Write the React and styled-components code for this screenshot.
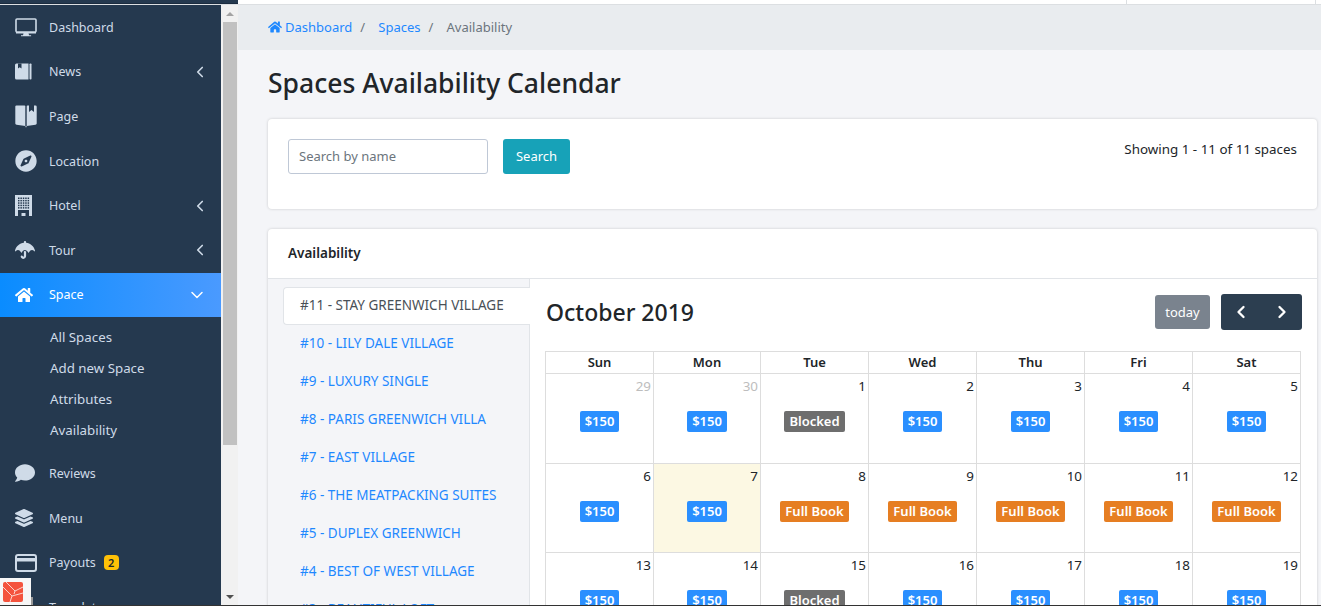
import React from "react";
import styled, { createGlobalStyle } from "styled-components";
import { ChevronLeft, ChevronRight, ChevronDown } from "lucide-react";
import { FaHome, FaCompass, FaUmbrella, FaComment, FaLayerGroup, FaFileAlt } from "react-icons/fa";

const GlobalStyle = createGlobalStyle`
	html, body {
		margin: 0;
		height: 100%;
		overflow: hidden;
		font-family: "Noto Sans", "Open Sans", sans-serif;
		font-size: 13px;
		color: #212529;
	}
	* {
		box-sizing: border-box;
	}
`;

function DesktopIcon() {
	return (
		<svg width="22" height="19" viewBox="0 0 22 19">
			<rect x="1" y="1" width="20" height="13" rx="1" fill="none" stroke="currentColor" strokeWidth="1.6" />
			<path d="M1 14h20v1.4H1zM8.500 15.400h5l.6 1.800h2v1H6v-1h2z" fill="currentColor" />
		</svg>
	);
}

function NewsIcon() {
	return (
		<svg width="17" height="17" viewBox="0 0 17 17">
			<path d="M1.500 0.500H13.500V16.500H1.500Q0 16.500 0 15V2Q0 0.500 1.500 0.500z" fill="currentColor" />
			<path d="M3 0.500h3.500v5L4.700 4.200 3 5.500z" fill="#25394f" />
			<rect x="14.500" y="0.500" width="2" height="16" rx="0.800" fill="currentColor" />
		</svg>
	);
}

function PageIcon() {
	return (
		<svg width="22" height="23" viewBox="0 0 22 23">
			<path d="M1.500 0.500H9.500Q10.300 0.500 10.300 1.500V21L1.500 19.800Q0.300 19.600 0.300 18.500V1.700Q0.300 0.500 1.500 0.500z" fill="currentColor" />
			<path d="M11.700 21V1.500Q11.700 0.500 12.500 0.500H14V7L16.500 5 19 7V0.500H20.500Q21.700 0.500 21.700 1.700V18.500Q21.700 19.600 20.500 19.800z" fill="currentColor" />
			<path d="M10.300 21h1.400l-.7 1.800z" fill="currentColor" />
		</svg>
	);
}

function BuildingIcon() {
	const windows = [];
	for (let row = 0; row < 5; row++) {
		for (let col = 0; col < 5; col++) {
			windows.push(<rect key={row + "-" + col} x={3 + col * 2.4} y={2.500 + row * 2.400} width="1.500" height="1.500" />);
		}
	}
	return (
		<svg width="17" height="21" viewBox="0 0 17 21">
			<rect width="17" height="21" fill="currentColor" />
			<g fill="#25394f">
				{windows}
				<path d="M3 15h11v6h-3.500v-3h-4v3H3z" />
			</g>
		</svg>
	);
}

function CardIcon() {
	return (
		<svg width="22" height="18" viewBox="0 0 22 18">
			<rect x="1" y="1" width="20" height="16" rx="2" fill="none" stroke="currentColor" strokeWidth="2" />
			<rect x="1" y="4" width="20" height="3.500" fill="currentColor" />
		</svg>
	);
}

const navItems = [
	{ label: "Dashboard", icon: <DesktopIcon /> },
	{ label: "News", icon: <NewsIcon />, more: true },
	{ label: "Page", icon: <PageIcon /> },
	{ label: "Location", icon: <FaCompass size={22} /> },
	{ label: "Hotel", icon: <BuildingIcon />, more: true },
	{ label: "Tour", icon: <FaUmbrella size={20} />, more: true },
	{
		label: "Space",
		icon: <FaHome size={18} />,
		active: true,
		children: ["All Spaces", "Add new Space", "Attributes", "Availability"],
	},
	{ label: "Reviews", icon: <FaComment size={20} /> },
	{ label: "Menu", icon: <FaLayerGroup size={18} /> },
	{ label: "Payouts", icon: <CardIcon />, badge: 2 },
	{ label: "Template", icon: <FaFileAlt size={20} /> },
];

const spaces = [
	"#11 - STAY GREENWICH VILLAGE",
	"#10 - LILY DALE VILLAGE",
	"#9 - LUXURY SINGLE",
	"#8 - PARIS GREENWICH VILLA",
	"#7 - EAST VILLAGE",
	"#6 - THE MEATPACKING SUITES",
	"#5 - DUPLEX GREENWICH",
	"#4 - BEST OF WEST VILLAGE",
	"#3 - BEAUTIFUL LOFT",
];

const weekDays = ["Sun", "Mon", "Tue", "Wed", "Thu", "Fri", "Sat"];

const P = { title: "$150", kind: "price" };
const B = { title: "Blocked", kind: "blocked" };
const F = { title: "Full Book", kind: "full" };

const weeks = [
	[
		{ day: 29, muted: true, event: P },
		{ day: 30, muted: true, event: P },
		{ day: 1, event: B },
		{ day: 2, event: P },
		{ day: 3, event: P },
		{ day: 4, event: P },
		{ day: 5, event: P },
	],
	[
		{ day: 6, event: P },
		{ day: 7, today: true, event: P },
		{ day: 8, event: F },
		{ day: 9, event: F },
		{ day: 10, event: F },
		{ day: 11, event: F },
		{ day: 12, event: F },
	],
	[
		{ day: 13, event: P },
		{ day: 14, event: P },
		{ day: 15, event: B },
		{ day: 16, event: P },
		{ day: 17, event: P },
		{ day: 18, event: P },
		{ day: 19, event: P },
	],
];

export default function App() {
	return (
		<Page>
			<GlobalStyle />
			<TopStrip>
				<TopDark />
				<TopCell $width="889px" />
				<TopCell $width="189px" />
			</TopStrip>
			<Body>
				<Sidebar>
					{navItems.map((item) => (
						<React.Fragment key={item.label}>
							<NavItem $active={item.active}>
								<NavIcon>{item.icon}</NavIcon>
								<span>{item.label}</span>
								{item.badge && <NavBadge>{item.badge}</NavBadge>}
								{item.more && (
									<NavArrow>
										<ChevronLeft size={18} strokeWidth={2.2} />
									</NavArrow>
								)}
								{item.active && (
									<DownArrow>
										<ChevronDown size={20} strokeWidth={1.8} />
									</DownArrow>
								)}
							</NavItem>
							{item.children && (
								<SubNav>
									{item.children.map((child) => (
										<SubItem key={child}>{child}</SubItem>
									))}
								</SubNav>
							)}
						</React.Fragment>
					))}
				</Sidebar>
				<ScrollBar>
					<ArrowUp />
					<ScrollThumb />
					<ArrowDown />
				</ScrollBar>
				<Main>
					<Breadcrumb>
						<Crumb href="#">
							<FaHome size={14} /> Dashboard
						</Crumb>
						<Slash>/</Slash>
						<Crumb href="#">Spaces</Crumb>
						<Slash>/</Slash>
						<CurrentCrumb>Availability</CurrentCrumb>
					</Breadcrumb>
					<Content>
						<Title>Spaces Availability Calendar</Title>
						<SearchCard>
							<SearchInput placeholder="Search by name" />
							<SearchButton>Search</SearchButton>
							<ResultCount>Showing 1 - 11 of 11 spaces</ResultCount>
						</SearchCard>
						<PanelCard>
							<PanelHeader>Availability</PanelHeader>
							<PanelBody>
								<SpaceList>
									{spaces.map((name, i) => (
										<SpaceTab key={name} $active={i === 0}>
											{name}
										</SpaceTab>
									))}
								</SpaceList>
								<CalendarPanel>
									<Toolbar>
										<MonthTitle>October 2019</MonthTitle>
										<TodayButton>today</TodayButton>
										<NavButtons>
											<ChevronLeft size={20} strokeWidth={2.8} />
											<ChevronRight size={20} strokeWidth={2.8} />
										</NavButtons>
									</Toolbar>
									<CalendarGrid>
										{weekDays.map((d) => (
											<DayHead key={d}>{d}</DayHead>
										))}
										{weeks.flat().map((cell) => (
											<DayCell key={cell.day + (cell.muted ? "m" : "")} $today={cell.today}>
												<DayNumber $muted={cell.muted}>{cell.day}</DayNumber>
												<EventBadge $kind={cell.event.kind}>{cell.event.title}</EventBadge>
											</DayCell>
										))}
									</CalendarGrid>
								</CalendarPanel>
							</PanelBody>
						</PanelCard>
					</Content>
				</Main>
			</Body>
			<BottomRule />
			<LogoBox>
				<svg width="20" height="20" viewBox="0 0 20 20">
					<rect width="20" height="20" rx="2" fill="#f4533d" />
					<path d="M0 5l9 9 11-3M9 14l-2 6M3 0l9 9 8-4M12 9l-1 3" fill="none" stroke="#fbe3de" strokeWidth="0.9" />
				</svg>
			</LogoBox>
		</Page>
	);
}

const Page = styled.div`
	position: relative;
	display: flex;
	flex-direction: column;
	height: 100vh;
	overflow: hidden;
	background-color: #f4f5f8;
`;

const TopStrip = styled.div`
	display: flex;
	flex: 0 0 4px;
	background-color: #fff;
	border-bottom: 1px solid #dcdfe2;
`;

const TopDark = styled.div`
	width: 238px;
	height: 4px;
	background-color: #25394f;
	border-bottom: 1px solid #1c2c3f;
`;

const TopCell = styled.div`
	width: ${(props) => props.$width};
	border-right: 1px solid #dcdfe2;
`;

const Body = styled.div`
	display: flex;
	flex: 1;
	min-height: 0;
`;

const Sidebar = styled.nav`
	flex: 0 0 221px;
	background-color: #25394f;
	color: #cfdbe8;
	overflow: hidden;
`;

const NavItem = styled.div`
	display: flex;
	align-items: center;
	height: 44.6px;
	padding: 0 12px 0 15px;
	font-size: 12.5px;
	color: ${(props) => (props.$active ? "#fff" : "#cfdbe8")};
	background: ${(props) => (props.$active ? "linear-gradient(90deg, #0a8cff, #4a9aff)" : "none")};
`;

const NavIcon = styled.span`
	display: flex;
	align-items: center;
	flex: 0 0 34px;
`;

const NavArrow = styled.span`
	display: flex;
	margin-left: auto;
`;

const DownArrow = styled(NavArrow)`
	margin-right: 2px;
`;

const NavBadge = styled.span`
	width: 15px;
	height: 15px;
	margin-left: 8px;
	line-height: 15px;
	text-align: center;
	font-size: 11px;
	font-weight: 600;
	color: #212529;
	background-color: #ffc107;
	border-radius: 4px;
`;

const SubNav = styled.div`
	padding: 5px 0 5px 50px;
`;

const SubItem = styled.div`
	height: 31px;
	line-height: 31px;
	font-size: 13.3px;
	color: #cfdbe8;
`;

const ScrollBar = styled.div`
	display: flex;
	flex-direction: column;
	align-items: center;
	flex: 0 0 17px;
	background-color: #f1f1f1;
`;

const ArrowUp = styled.div`
	margin: 7px 0 6px;
	border: 4px solid transparent;
	border-top: 0;
	border-bottom: 4px solid #a3a3a3;
`;

const ScrollThumb = styled.div`
	width: 14px;
	height: 423px;
	background-color: #c1c1c1;
`;

const ArrowDown = styled.div`
	margin: auto 0 6px;
	border: 4px solid transparent;
	border-bottom: 0;
	border-top: 4px solid #505050;
`;

const Main = styled.main`
	flex: 1;
	min-width: 0;
	overflow: hidden;
`;

const Breadcrumb = styled.div`
	display: flex;
	align-items: center;
	height: 45px;
	padding: 0 0 2px 30px;
	background-color: #e9ecef;
	font-size: 13px;
`;

const Crumb = styled.a`
	display: inline-flex;
	align-items: center;
	gap: 3px;
	color: #1e88ff;
	text-decoration: none;
`;

const Slash = styled.span`
	width: 26px;
	padding-left: 8px;
	color: #6c757d;
`;

const CurrentCrumb = styled.span`
	color: #6c757d;
`;

const Content = styled.div`
	padding: 0 4px 0 30px;
`;

const Title = styled.h1`
	margin: 0;
	height: 69px;
	line-height: 66px;
	font-size: 26.5px;
	font-weight: 500;
	color: #212529;
`;

const SearchCard = styled.div`
	display: flex;
	align-items: flex-start;
	height: 90px;
	padding: 20px;
	background-color: #fff;
	border-radius: 4px;
	box-shadow: 0 0 3px rgba(0, 0, 0, 0.18);
`;

const SearchInput = styled.input`
	width: 200px;
	height: 35px;
	padding: 0 10px 2px;
	font: inherit;
	font-size: 13px;
	border: 1px solid #bfc8d6;
	border-radius: 3px;
	outline: none;
	&::placeholder {
		color: #6c757d;
		opacity: 1;
	}
`;

const SearchButton = styled.button`
	width: 67px;
	height: 35px;
	margin-left: 15px;
	padding: 0 0 2px;
	font: inherit;
	font-size: 13px;
	color: #fff;
	background-color: #17a2b8;
	border: 0;
	border-radius: 3px;
`;

const ResultCount = styled.div`
	margin-left: auto;
	font-size: 13.4px;
	line-height: 20px;
`;

const PanelCard = styled.div`
	margin-top: 20px;
	background-color: #fff;
	border-radius: 4px 4px 0 0;
	box-shadow: 0 0 3px rgba(0, 0, 0, 0.18);
`;

const PanelHeader = styled.div`
	height: 50px;
	line-height: 48px;
	padding-left: 20px;
	font-size: 13.5px;
	font-weight: 600;
	border-bottom: 1px solid #e1e4e8;
`;

const PanelBody = styled.div`
	display: flex;
`;

const SpaceList = styled.div`
	flex: 0 0 262px;
	padding: 8px 0 0 15px;
	background-color: #f4f5f8;
	border-right: 1px solid #e1e4e8;
`;

const SpaceTab = styled.div`
	position: relative;
	height: 38px;
	margin-right: ${(props) => (props.$active ? "-1px" : "0")};
	padding-left: 16px;
	line-height: 34px;
	font-size: 13.5px;
	color: ${(props) => (props.$active ? "#495057" : "#1e88ff")};
	background-color: ${(props) => (props.$active ? "#fff" : "transparent")};
	border: 1px solid ${(props) => (props.$active ? "#e1e4e8" : "transparent")};
	border-right: 0;
	border-radius: 4px 0 0 4px;
`;

const CalendarPanel = styled.div`
	flex: 1;
	min-width: 0;
	padding: 15px 15px 0;
`;

const Toolbar = styled.div`
	display: flex;
	align-items: flex-start;
	height: 57px;
`;

const MonthTitle = styled.h2`
	margin: 0 auto 0 1px;
	line-height: 36px;
	font-size: 23px;
	font-weight: 500;
`;

const TodayButton = styled.button`
	width: 55px;
	height: 34px;
	margin-top: 1px;
	padding: 0 0 1px;
	font: inherit;
	font-size: 13px;
	color: #fff;
	background-color: #7a838e;
	border: 0;
	border-radius: 3px;
`;

const NavButtons = styled.div`
	display: flex;
	align-items: center;
	justify-content: space-between;
	width: 81px;
	height: 36px;
	margin-left: 11px;
	padding: 0 10px;
	color: #fff;
	background-color: #2c3e50;
	border-radius: 3px;
`;

const CalendarGrid = styled.div`
	display: grid;
	grid-template-columns: 108px 107px repeat(5, 108px);
	grid-template-rows: 22px 90px 89px 90px;
	width: 756px;
	border-top: 1px solid #ddd;
	border-left: 1px solid #ddd;
`;

const DayHead = styled.div`
	line-height: 21px;
	text-align: center;
	font-size: 13px;
	font-weight: 600;
	border-right: 1px solid #ddd;
	border-bottom: 1px solid #ddd;
`;

const DayCell = styled.div`
	display: flex;
	flex-direction: column;
	align-items: center;
	padding-top: 2px;
	background-color: ${(props) => (props.$today ? "#fcf8e3" : "#fff")};
	border-right: 1px solid #ddd;
	border-bottom: 1px solid #ddd;
`;

const DayNumber = styled.div`
	align-self: flex-end;
	padding-right: 2px;
	line-height: 20px;
	font-size: 13.4px;
	color: ${(props) => (props.$muted ? "#bdbdbd" : "#212529")};
`;

const eventColors = {
	price: "#2a8fff",
	blocked: "#6e6e6e",
	full: "#e67e22",
};

const EventBadge = styled.div`
	margin-top: 15px;
	padding: 0 5px;
	height: 21px;
	line-height: 20px;
	font-size: 13px;
	font-weight: 600;
	color: #fff;
	background-color: ${(props) => eventColors[props.$kind]};
	border-radius: 2px;
`;

const BottomRule = styled.div`
	flex: 0 0 1px;
	background-color: #333;
`;

const LogoBox = styled.div`
	position: absolute;
	left: 0;
	bottom: 1px;
	display: flex;
	align-items: center;
	justify-content: center;
	width: 31px;
	height: 27px;
	padding-right: 5px;
	background-color: #f7f7f7;
	&::after {
		content: "";
		position: absolute;
		left: 31px;
		bottom: 0;
		width: 2px;
		height: 8px;
		background-color: #9a9a9a;
	}
`;
